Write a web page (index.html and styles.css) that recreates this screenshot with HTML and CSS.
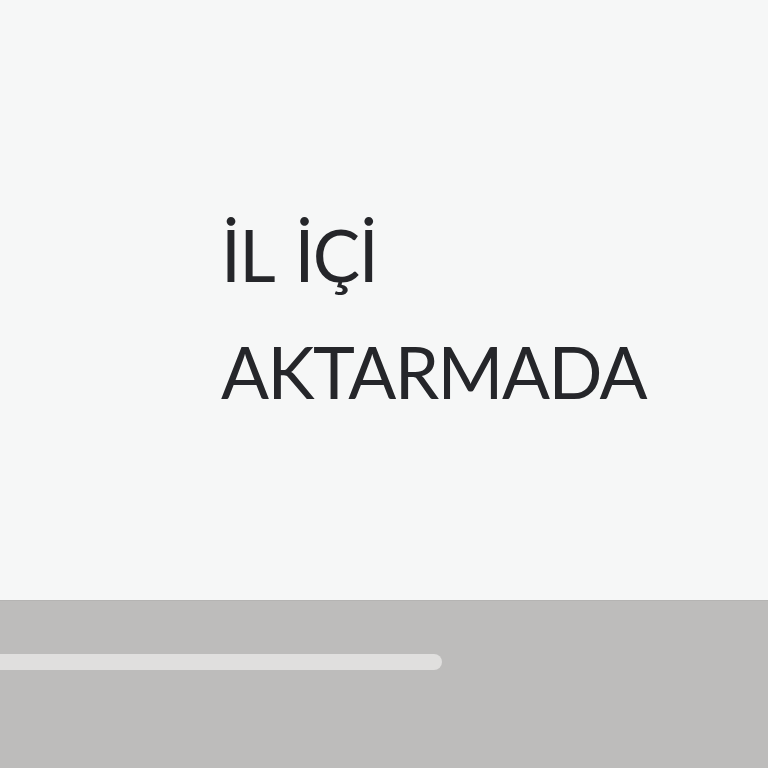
FILE: index.html
```html
<!DOCTYPE html>
<html lang="tr">
<head>
<meta charset="utf-8">
<link rel="stylesheet" href="styles.css">
</head>
<body>
<div class="screen">
  <section class="hero">
    <h1 class="title"><span class="line">İL İÇİ</span><span class="line">AKTARMADA</span></h1>
  </section>
  <section class="band">
    <div class="track"><div class="bar" style="width:442px"></div></div>
  </section>
</div>
</body>
</html>
```
FILE: styles.css
```css
html, body { margin: 0; padding: 0; }
body { background: #f6f7f7; font-family: Lato, "Noto Sans", sans-serif; }
.screen { width: 768px; height: 768px; display: flex; flex-direction: column; overflow: hidden; }
.hero { height: 600px; box-sizing: border-box; padding: 196px 0 0 221px; background: #f6f7f7; }
.title { margin: 0; font-weight: 400; font-size: 71px; line-height: 117px; color: #25262a; letter-spacing: -1.6px; word-spacing: 6px; }
.line { display: block; }
.band { flex: 1; background: #bdbcbb; border-top: 1px solid #b5b4b3; padding-top: 53px; }
.bar { height: 16px; background: #e0dfde; border-radius: 0 8px 8px 0; }
```
